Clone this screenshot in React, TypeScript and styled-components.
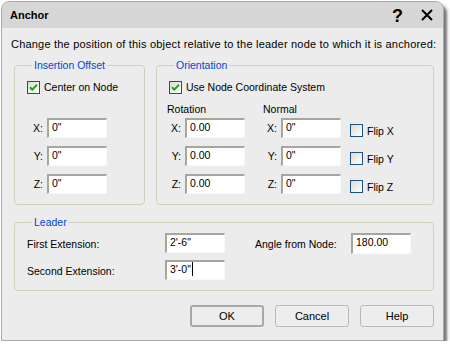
import React from "react";
import styled, { createGlobalStyle } from "styled-components";

const GlobalStyle = createGlobalStyle`
  html, body {
    margin: 0;
    padding: 0;
    background: #ffffff;
  }
  body {
    font-family: "Liberation Sans", Arial, sans-serif;
    font-size: 10.5px;
    color: #000;
  }
`;

const Window = styled.div`
  margin: 1px 0 0 1px;
  width: 443px;
  box-sizing: border-box;
  border: 1px solid #a9a9a9;
  border-radius: 8px 8px 0 0;
  background: #ececec;
  box-shadow: 3px 4px 3px rgba(0, 0, 0, 0.55);
  overflow: hidden;
`;

const TitleBar = styled.div`
  height: 26px;
  display: flex;
  align-items: center;
  padding: 0 10px 0 8px;
  background: #d6d6d6;
`;

const Title = styled.div`
  flex: 1;
  font-weight: bold;
  font-size: 11px;
`;

const Help = styled.span`
  font-weight: bold;
  font-size: 18px;
  line-height: 18px;
  margin-right: 18px;
  margin-top: 1px;
`;

const Body = styled.div`
  padding: 9px 9px 13px 9px;
  display: flex;
  flex-direction: column;
`;

const Intro = styled.div`
  line-height: 14px;
  font-size: 11px;
  letter-spacing: 0.2px;
  white-space: nowrap;
`;

const Row = styled.div`
  display: flex;
  gap: 11px;
  margin-top: 7px;
  margin-left: 3px;
`;

const Group = styled.fieldset<{ $w: number }>`
  width: ${(p) => p.$w}px;
  box-sizing: border-box;
  margin: 0;
  border: 1px solid #d0d0bf;
  border-radius: 4px;
  padding: 0 8px 10px 12px;
  min-width: 0;
`;

const Legend = styled.legend`
  color: #0046d5;
  padding: 0 2px;
  margin-left: 5px;
  line-height: 14px;
  font-size: 10.5px;
`;

const CheckRow = styled.label`
  display: flex;
  align-items: center;
  gap: 4px;
  height: 14px;
  margin-top: 8px;
`;

const Box = styled.span`
  width: 13px;
  height: 13px;
  box-sizing: border-box;
  border: 1px solid #1c5180;
  background: linear-gradient(135deg, #dcdcd5 0%, #f4f4f1 70%, #ffffff 100%);
  display: inline-flex;
  align-items: center;
  justify-content: center;
  flex: none;
`;

const OffsetGrid = styled.div`
  display: grid;
  grid-template-columns: 19px 60px;
  grid-auto-rows: 20px;
  row-gap: 8px;
  margin-top: 24px;
  margin-left: 1px;
`;

const AxisLabel = styled.span`
  align-self: center;
  text-align: right;
  padding-right: 4px;
  line-height: 14px;
`;

const Field = styled.div<{ $tall?: boolean }>`
  width: 60px;
  height: ${(p) => (p.$tall ? 21 : 20)}px;
  box-sizing: border-box;
  background: #fff;
  border-top: 2px solid #a6a69c;
  border-left: 2px solid #a6a69c;
  border-right: 1px solid #f8f8f8;
  border-bottom: 1px solid #f8f8f8;
  padding: 0 3px;
  line-height: 14px;
  white-space: nowrap;
  display: flex;
  align-items: flex-start;
`;

const Caret = styled.span`
  display: inline-block;
  width: 1px;
  height: 14px;
  background: #000;
  margin-left: 1px;
`;

const ColHeads = styled.div`
  display: flex;
  margin-top: 8px;
  margin-left: -2px;
  line-height: 14px;
  height: 14px;
  & > span:first-child {
    width: 96px;
  }
`;

const OrientGrid = styled.div`
  display: grid;
  grid-template-columns: 15px 60px 22px 14px 60px 9px auto;
  grid-auto-rows: 20px;
  row-gap: 8px;
  margin-top: 2px;
  margin-left: 1px;
`;

const FlipCell = styled.label`
  display: flex;
  align-items: center;
  gap: 4px;
  margin-top: 6px;
  height: 13px;
`;

const Gap = styled.span``;

const LeaderGroup = styled(Group)`
  margin: 10px 0 0 3px;
  padding: 4px 8px 10px 12px;
`;

const LeaderGrid = styled.div`
  display: grid;
  grid-template-columns: 138px 60px 30px 96px 60px;
  grid-auto-rows: 20px;
  row-gap: 7px;
`;

const LeaderLabel = styled.span`
  align-self: center;
  line-height: 14px;
  margin-top: 2px;
`;

const Buttons = styled.div`
  display: flex;
  justify-content: flex-end;
  gap: 11px;
  margin-top: 14px;
`;

const Button = styled.button<{ $default?: boolean }>`
  width: 74px;
  height: 22px;
  box-sizing: border-box;
  border: ${(p) => (p.$default ? "2px solid #a8a8a8" : "1px solid #b9b9b9")};
  border-radius: 3px;
  background: #ededed;
  font-family: "Liberation Sans", Arial, sans-serif;
  font-size: 11px;
  color: #000;
  padding: 0;
`;

const Check = () => (
  <svg width="11" height="11" viewBox="0 0 11 11">
    <path d="M2 5.2 L4.3 7.6 L9 2.8" fill="none" stroke="#21a121" strokeWidth="2" />
  </svg>
);

const CheckBox: React.FC<{ checked?: boolean; label: string }> = ({ checked, label }) => (
  <>
    <Box>{checked && <Check />}</Box>
    <span>{label}</span>
  </>
);

const axes = ["X", "Y", "Z"];

const App: React.FC = () => {
  return (
    <>
      <GlobalStyle />
      <Window>
        <TitleBar>
          <Title>Anchor</Title>
          <Help>?</Help>
          <svg width="12" height="12" viewBox="0 0 12 12">
            <path d="M1 1 L11 11 M11 1 L1 11" stroke="#000" strokeWidth="2" />
          </svg>
        </TitleBar>
        <Body>
          <Intro>Change the position of this object relative to the leader node to which it is anchored:</Intro>
          <Row>
            <Group $w={131}>
              <Legend>Insertion Offset</Legend>
              <CheckRow>
                <CheckBox checked label="Center on Node" />
              </CheckRow>
              <OffsetGrid>
                {axes.map((a) => (
                  <React.Fragment key={a}>
                    <AxisLabel>{a}:</AxisLabel>
                    <Field>0"</Field>
                  </React.Fragment>
                ))}
              </OffsetGrid>
            </Group>
            <Group $w={278}>
              <Legend>Orientation</Legend>
              <CheckRow>
                <CheckBox checked label="Use Node Coordinate System" />
              </CheckRow>
              <ColHeads>
                <span>Rotation</span>
                <span>Normal</span>
              </ColHeads>
              <OrientGrid>
                {axes.map((a) => (
                  <React.Fragment key={a}>
                    <AxisLabel>{a}:</AxisLabel>
                    <Field>0.00</Field>
                    <Gap />
                    <AxisLabel>{a}:</AxisLabel>
                    <Field>0"</Field>
                    <Gap />
                    <FlipCell>
                      <CheckBox label={`Flip ${a}`} />
                    </FlipCell>
                  </React.Fragment>
                ))}
              </OrientGrid>
            </Group>
          </Row>
          <LeaderGroup $w={420}>
            <Legend>Leader</Legend>
            <LeaderGrid>
              <LeaderLabel>First Extension:</LeaderLabel>
              <Field>2'-6"</Field>
              <Gap />
              <LeaderLabel>Angle from Node:</LeaderLabel>
              <Field $tall>180.00</Field>
              <LeaderLabel>Second Extension:</LeaderLabel>
              <Field>
                3'-0"<Caret />
              </Field>
            </LeaderGrid>
          </LeaderGroup>
          <Buttons>
            <Button $default>OK</Button>
            <Button>Cancel</Button>
            <Button>Help</Button>
          </Buttons>
        </Body>
      </Window>
    </>
  );
};

export default App;
